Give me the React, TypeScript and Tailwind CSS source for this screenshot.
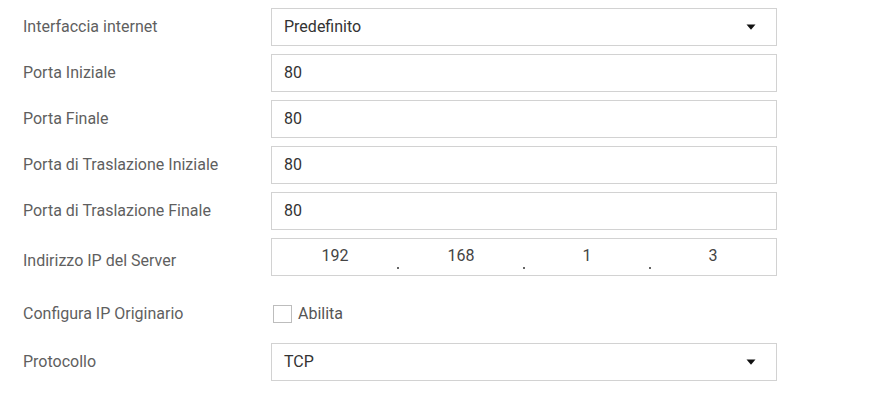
import React from "react";

const Caret = () => (
  <svg width="10" height="6" viewBox="0 0 10 6" className="shrink-0">
    <path d="M0.5 0.5H9.5L5 5.8Z" fill="#111" />
  </svg>
);

const Label = ({ children, className = "" }: { children: React.ReactNode; className?: string }) => (
  <div className={`w-[248px] shrink-0 text-[16px] text-[#5f5f5f] ${className}`}>{children}</div>
);

const TextBox = ({ value }: { value: string }) => (
  <div className="flex h-[38px] w-[506px] items-center border border-[#d2d2d2] bg-white px-3 text-[16px] text-[#333]">
    {value}
  </div>
);

const SelectBox = ({ value }: { value: string }) => (
  <div className="flex h-[38px] w-[506px] items-center justify-between border border-[#d2d2d2] bg-white pl-3 pr-5 text-[16px] text-[#333]">
    <span>{value}</span>
    <Caret />
  </div>
);

const IpBox = ({ parts }: { parts: string[] }) => (
  <div className="flex h-[38px] w-[506px] border border-[#d2d2d2] bg-white text-[16px] text-[#444]">
    {parts.map((p, i) => (
      <div key={i} className="relative flex flex-1 items-center justify-center pb-[2px]">
        {p}
        {i < parts.length - 1 && (
          <span className="absolute -right-[1px] bottom-[6px] h-[2px] w-[2px] bg-[#666]" />
        )}
      </div>
    ))}
  </div>
);

export default function App() {
  return (
    <div
      className="h-[400px] w-[890px] bg-white pl-[23px] pt-2"
      style={{ fontFamily: "Roboto, 'Liberation Sans', sans-serif" }}
    >
      <div className="mb-2 flex items-center">
        <Label>Interfaccia internet</Label>
        <SelectBox value="Predefinito" />
      </div>
      <div className="mb-2 flex items-center">
        <Label>Porta Iniziale</Label>
        <TextBox value="80" />
      </div>
      <div className="mb-2 flex items-center">
        <Label>Porta Finale</Label>
        <TextBox value="80" />
      </div>
      <div className="mb-2 flex items-center">
        <Label>Porta di Traslazione Iniziale</Label>
        <TextBox value="80" />
      </div>
      <div className="mb-2 flex items-center">
        <Label>Porta di Traslazione Finale</Label>
        <TextBox value="80" />
      </div>
      <div className="mb-[19px] flex items-center">
        <Label className="pt-2">Indirizzo IP del Server</Label>
        <IpBox parts={["192", "168", "1", "3"]} />
      </div>
      <div className="mb-[10px] flex h-[38px] items-center">
        <Label>Configura IP Originario</Label>
        <label className="flex items-center gap-[6px] pl-[2px] text-[16px] text-[#555]">
          <span className="h-[18px] w-[19px] border border-[#bdbdbd] bg-white" />
          Abilita
        </label>
      </div>
      <div className="flex items-center">
        <Label>Protocollo</Label>
        <SelectBox value="TCP" />
      </div>
    </div>
  );
}
